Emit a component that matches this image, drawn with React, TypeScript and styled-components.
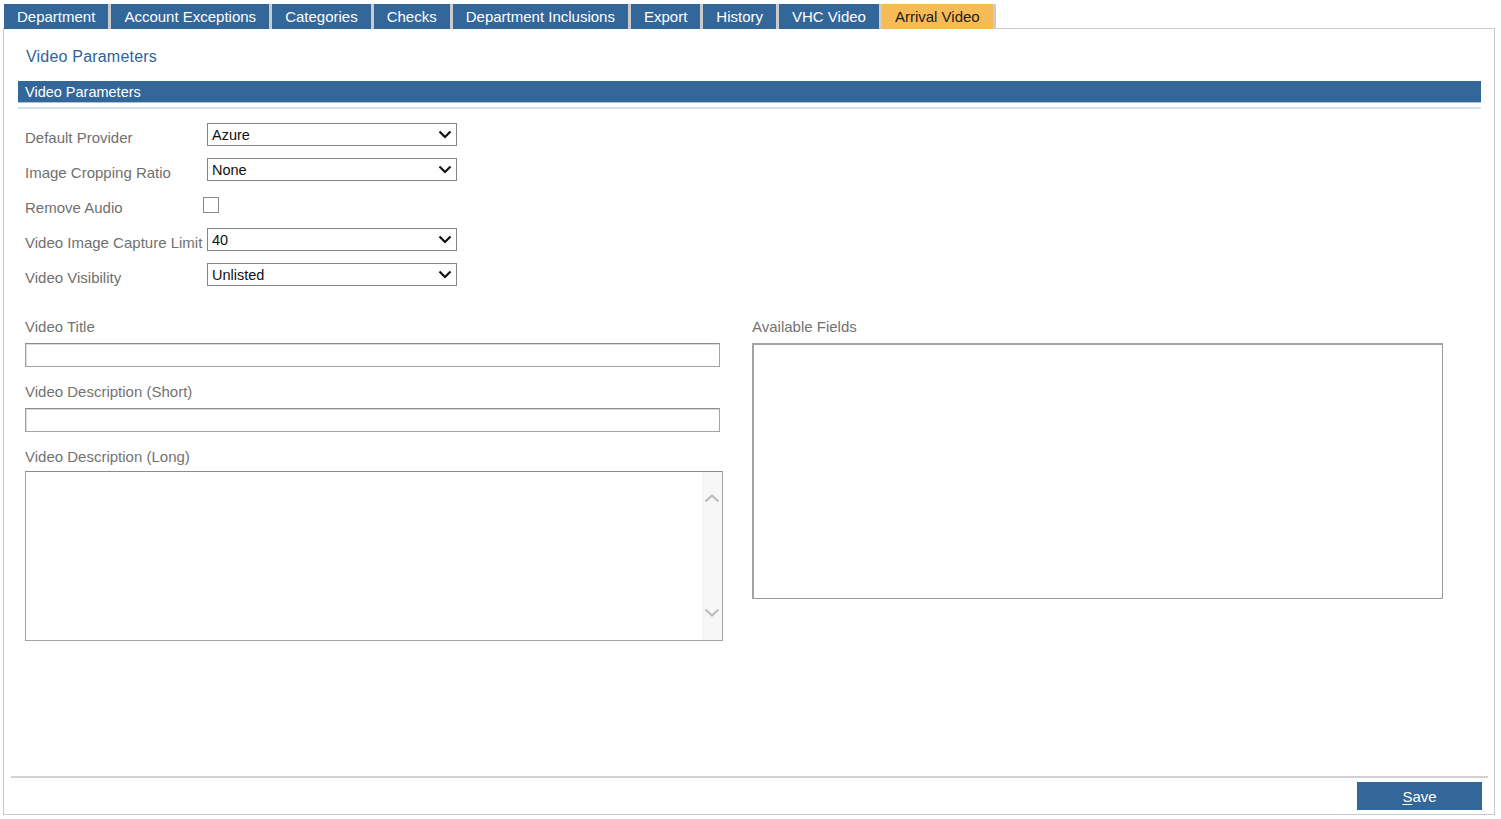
import React from "react";
import styled, { createGlobalStyle } from "styled-components";

const GlobalStyle = createGlobalStyle`
  html, body { margin: 0; padding: 0; background: #ffffff; }
  body { font-family: "Liberation Sans", Arial, sans-serif; }
  * { box-sizing: border-box; }
`;

const Page = styled.div`
  height: 819px;
  padding: 4px 6px 4px 3px;
  display: flex;
  flex-direction: column;
`;

const TabRow = styled.div`
  display: flex;
  margin-left: 1px;
  margin-bottom: -1px;
  position: relative;
  z-index: 1;
`;

const Tab = styled.div<{ $active?: boolean }>`
  height: 25px;
  padding: 0 13px;
  display: flex;
  align-items: center;
  font-size: 15px;
  color: ${(p) => (p.$active ? "#1b1b1b" : "#ffffff")};
  background: ${(p) => (p.$active ? "#f6bb56" : "#336699")};
  border-right: 3px solid #cbcbcb;
  white-space: nowrap;
`;

const Panel = styled.div`
  flex: 1;
  border: 1px solid #c9c9c9;
  display: flex;
  flex-direction: column;
`;

const Body = styled.div`
  flex: 1;
  padding: 0 13px 0 14px;
`;

const Title = styled.div`
  padding: 19px 0 0 8px;
  height: 52px;
  font-size: 16px;
  letter-spacing: 0.2px;
  line-height: 18px;
  color: #2f6398;
`;

const SectionBar = styled.div`
  height: 22px;
  background: #336699;
  border-bottom: 1px solid #a8c2dc;
  color: #ffffff;
  font-size: 14.5px;
  line-height: 22px;
  padding-left: 7px;
`;

const Divider = styled.div`
  margin-top: 4px;
  height: 2px;
  background: #d3e2ef;
`;

const Form = styled.div`
  margin-top: 14px;
  padding-left: 7px;
  display: flex;
  flex-direction: column;
`;

const Row = styled.div`
  display: grid;
  grid-template-columns: 182px 250px;
  height: 35px;
  align-items: start;
`;

const Label = styled.div`
  padding-top: 6px;
  font-size: 15px;
  line-height: 18px;
  color: #707070;
  white-space: nowrap;
`;

const SelectBox = styled.div`
  height: 23px;
  border: 1px solid #858585;
  display: flex;
  align-items: center;
  justify-content: space-between;
  padding: 0 4px 0 4px;
  font-size: 14.5px;
  color: #111;
  background: #fff;
`;

const CheckBox = styled.div`
  width: 16px;
  height: 16px;
  margin-top: 4px;
  margin-left: -4px;
  border: 1px solid #8a8a8a;
  background: #fff;
`;

const Lower = styled.div`
  margin-top: 20px;
  padding-left: 7px;
  display: grid;
  grid-template-columns: 698px 691px;
  column-gap: 29px;
`;

const Column = styled.div`
  display: flex;
  flex-direction: column;
`;

const FieldLabel = styled.div`
  font-size: 15px;
  line-height: 17px;
  color: #737373;
  margin-bottom: 8px;
`;

const TextInput = styled.div`
  width: 695px;
  height: 24px;
  border: 1px solid #a3a3a3;
  border-top-color: #8c8c8c;
  box-shadow: inset 1px 1px 0 #dcdcdc;
  margin-bottom: 16px;
`;

const TextArea = styled.div`
  margin-top: -2px;
  height: 170px;
  border: 1px solid #a3a3a3;
  border-top-color: #8c8c8c;
  display: flex;
`;

const AreaSpace = styled.div`
  flex: 1;
`;

const ScrollTrack = styled.div`
  width: 20px;
  background: #f7f7f7;
  display: flex;
  flex-direction: column;
  justify-content: space-between;
  align-items: center;
  padding: 22px 0 23px;
`;

const FieldsBox = styled.div`
  height: 256px;
  border: 1px solid #9c9c9c;
  border-top: 2px solid #a3a3a3;
  border-left: 2px solid #a3a3a3;
`;

const Footer = styled.div`
  padding: 0 12px 4px 7px;
  display: flex;
  flex-direction: column;
  align-items: flex-end;
`;

const FooterLine = styled.div`
  align-self: stretch;
  height: 2px;
  background: #d2d2d2;
  margin-right: -6px;
  margin-bottom: 4px;
`;

const SaveButton = styled.button`
  width: 125px;
  height: 28px;
  border: none;
  background: #336699;
  color: #ffffff;
  font-family: "Liberation Sans", Arial, sans-serif;
  font-size: 15px;
  padding: 1px 0 0;
  cursor: pointer;
  u { text-decoration: underline; text-underline-offset: 2px; }
`;

const Chevron = () => (
  <svg width="14" height="9" viewBox="0 0 14 9">
    <path d="M1.5 1.5 L7 7 L12.5 1.5" fill="none" stroke="#111" strokeWidth="2.2" />
  </svg>
);

const ScrollArrow = ({ up }: { up?: boolean }) => (
  <svg width="16" height="9" viewBox="0 0 16 9">
    <path
      d={up ? "M1.5 7.5 L8 1.5 L14.5 7.5" : "M1.5 1.5 L8 7.5 L14.5 1.5"}
      fill="none"
      stroke="#bdbdbd"
      strokeWidth="2.2"
    />
  </svg>
);

const tabs = [
  "Department",
  "Account Exceptions",
  "Categories",
  "Checks",
  "Department Inclusions",
  "Export",
  "History",
  "VHC Video",
  "Arrival Video",
];

const Select = ({ value }: { value: string }) => (
  <SelectBox>
    <span>{value}</span>
    <Chevron />
  </SelectBox>
);

export default function App() {
  return (
    <>
      <GlobalStyle />
      <Page>
        <TabRow>
          {tabs.map((t) => (
            <Tab key={t} $active={t === "Arrival Video"}>
              {t}
            </Tab>
          ))}
        </TabRow>
        <Panel>
          <Body>
            <Title>Video Parameters</Title>
            <SectionBar>Video Parameters</SectionBar>
            <Divider />
            <Form>
              <Row>
                <Label>Default Provider</Label>
                <Select value="Azure" />
              </Row>
              <Row>
                <Label>Image Cropping Ratio</Label>
                <Select value="None" />
              </Row>
              <Row>
                <Label>Remove Audio</Label>
                <CheckBox />
              </Row>
              <Row>
                <Label>Video Image Capture Limit</Label>
                <Select value="40" />
              </Row>
              <Row>
                <Label>Video Visibility</Label>
                <Select value="Unlisted" />
              </Row>
            </Form>
            <Lower>
              <Column>
                <FieldLabel>Video Title</FieldLabel>
                <TextInput />
                <FieldLabel>Video Description (Short)</FieldLabel>
                <TextInput />
                <FieldLabel>Video Description (Long)</FieldLabel>
                <TextArea>
                  <AreaSpace />
                  <ScrollTrack>
                    <ScrollArrow up />
                    <ScrollArrow />
                  </ScrollTrack>
                </TextArea>
              </Column>
              <Column>
                <FieldLabel>Available Fields</FieldLabel>
                <FieldsBox />
              </Column>
            </Lower>
          </Body>
          <Footer>
            <FooterLine />
            <SaveButton>
              <u>S</u>ave
            </SaveButton>
          </Footer>
        </Panel>
      </Page>
    </>
  );
}
